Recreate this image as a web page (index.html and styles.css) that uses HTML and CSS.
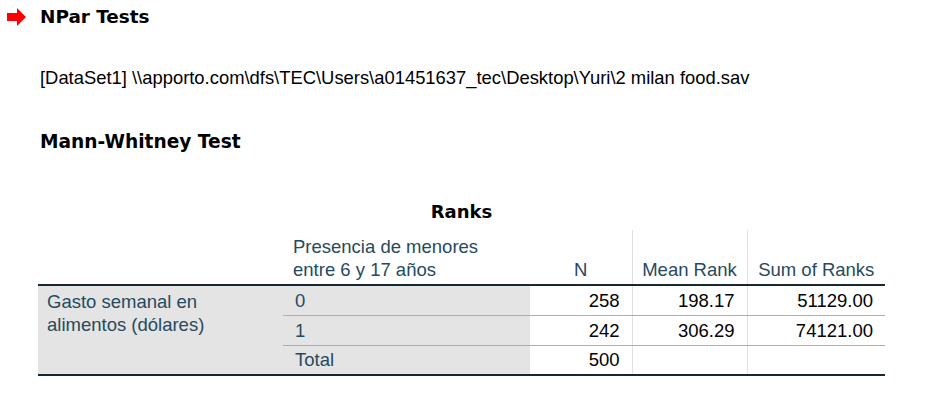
FILE: index.html
```html
<!DOCTYPE html>
<html lang="es">
<head>
<meta charset="utf-8">
<title>NPar Tests</title>
<link rel="stylesheet" href="styles.css">
</head>
<body>
<header class="heading">
  <svg class="arrow" width="20" height="20" viewBox="0 0 20 20" aria-hidden="true">
    <polygon points="0,6 10,6 10,1 19,10 10,19 10,14 0,14" fill="#ff0000"/>
  </svg>
  <h1 class="heading-title">NPar Tests</h1>
</header>
<p class="dataset">[DataSet1] \\apporto.com\dfs\TEC\Users\a01451637_tec\Desktop\Yuri\2 milan food.sav</p>
<h2 class="section-title">Mann-Whitney Test</h2>
<table class="ranks">
  <colgroup>
    <col class="c-var">
    <col class="c-grp">
    <col class="c-n">
    <col class="c-mean">
    <col class="c-sum">
  </colgroup>
  <tr class="row-title">
    <td colspan="5" class="table-title">Ranks</td>
  </tr>
  <tr class="row-head">
    <th class="h-empty"></th>
    <th class="h-left">Presencia de menores<br>entre 6 y 17 años</th>
    <th class="h-center">N</th>
    <th class="h-center h-line">Mean Rank</th>
    <th class="h-center h-line">Sum of Ranks</th>
  </tr>
  <tr class="row-data">
    <th rowspan="3" class="row-label">Gasto semanal en<br>alimentos (dólares)</th>
    <th class="grp">0</th>
    <td class="num">258</td>
    <td class="num v-line">198.17</td>
    <td class="num v-line">51129.00</td>
  </tr>
  <tr class="row-data">
    <th class="grp">1</th>
    <td class="num">242</td>
    <td class="num v-line">306.29</td>
    <td class="num v-line">74121.00</td>
  </tr>
  <tr class="row-data row-last">
    <th class="grp">Total</th>
    <td class="num">500</td>
    <td class="num v-line"></td>
    <td class="num v-line"></td>
  </tr>
</table>
</body>
</html>
```
FILE: styles.css
```css
html, body {
  margin: 0;
  padding: 0;
  background: #ffffff;
}

body {
  font-family: "Liberation Sans", Arial, sans-serif;
  color: #000000;
}

.heading {
  display: flex;
  align-items: center;
  height: 34px;
  padding-left: 7px;
  gap: 13px;
}

.arrow {
  display: block;
  flex: none;
}

.heading-title {
  margin: 0;
  font-family: "DejaVu Sans", Verdana, sans-serif;
  font-weight: bold;
  font-size: 18.4px;
  line-height: 22px;
  color: #000000;
}

.dataset {
  margin: 33px 0 0 40px;
  font-size: 18.4px;
  line-height: 22px;
  color: #000000;
}

.section-title {
  margin: 42px 0 0 40px;
  font-family: "DejaVu Sans", Verdana, sans-serif;
  font-weight: bold;
  font-size: 18.6px;
  line-height: 22px;
  color: #000000;
}

.ranks {
  margin: 38px 0 0 38px;
  border-collapse: collapse;
  table-layout: fixed;
  width: 847px;
  font-size: 18.5px;
}

.c-var { width: 245px; }
.c-grp { width: 247px; }
.c-n { width: 102px; }
.c-mean { width: 115px; }
.c-sum { width: 138px; }

.ranks th,
.ranks td {
  padding: 0;
  font-weight: normal;
}

.ranks .table-title {
  height: 37px;
  text-align: center;
  vertical-align: middle;
  font-family: "DejaVu Sans", Verdana, sans-serif;
  font-weight: bold;
  font-size: 18px;
  color: #000000;
  padding-top: 2px;
}

.row-head th {
  height: 51px;
  vertical-align: bottom;
  color: #264a60;
  line-height: 23px;
  padding-bottom: 3px;
  border-bottom: 2px solid #152935;
}

.h-left {
  text-align: left;
  padding-left: 10px !important;
}

.h-center {
  text-align: center;
}

.h-line,
.v-line {
  border-left: 1px solid #e0e0e0;
}

.row-data th,
.row-data td {
  height: 29px;
  vertical-align: middle;
}

.row-last th,
.row-last td {
  height: 28px;
}

.row-data .grp,
.row-data .num {
  border-bottom: 1px solid #aeaeae;
}

.row-last .grp,
.row-last .num,
.row-label {
  border-bottom: 2px solid #152935 !important;
}

.row-label {
  background: #e4e4e4;
  color: #264a60;
  text-align: left;
  vertical-align: top !important;
  line-height: 23px;
  padding: 4px 0 0 9px !important;
}

.grp {
  background: #e4e4e4;
  color: #264a60;
  text-align: left;
  padding-left: 12px !important;
}

.num {
  text-align: right;
  color: #010205;
  padding-right: 12px !important;
}
```
